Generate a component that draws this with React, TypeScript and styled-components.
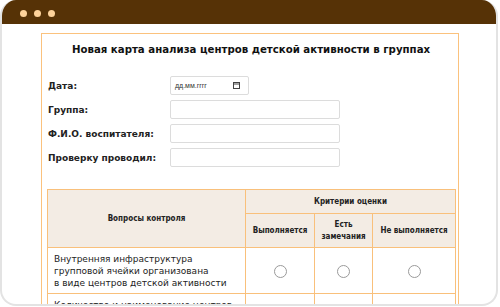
import React from "react";
import styled, { createGlobalStyle } from "styled-components";

const GlobalStyle = createGlobalStyle`
  html, body {
    margin: 0;
    padding: 0;
    background: #ffffff;
  }
  body {
    font-family: "DejaVu Sans", Verdana, sans-serif;
    color: #111;
  }
`;

// неразрывный пробел после предлога, как в исходной карте
const questions = [
  "Внутренняя инфраструктура групповой ячейки организована в\u00a0виде центров детской активности",
  "Количество и наименование центров детской активности соответствует возрасту детей",
];

const fields = ["Группа:", "Ф.И.О. воспитателя:", "Проверку проводил:"];

const App: React.FC = () => {
  return (
    <>
      <GlobalStyle />
      <Screen>
        <Frame>
          <TitleBar>
            <Dot />
            <Dot />
            <Dot />
          </TitleBar>
          <Viewport>
            <Sheet>
              <Heading>Новая карта анализа центров детской активности в группах</Heading>
              <Form>
                <Label>Дата:</Label>
                <DateField>
                  <span>дд.мм.гггг</span>
                  <svg width="7" height="7" viewBox="0 0 7 7">
                    <rect x="0.5" y="0.5" width="6" height="6" fill="none" stroke="#444" />
                    <line x1="0.5" y1="2" x2="6.5" y2="2" stroke="#444" />
                  </svg>
                </DateField>
                {fields.map((f) => (
                  <React.Fragment key={f}>
                    <Label>{f}</Label>
                    <TextInput type="text" />
                  </React.Fragment>
                ))}
              </Form>
              <Table>
                <colgroup>
                  <Col $w={198} />
                  <Col $w={69} />
                  <Col $w={58} />
                  <Col $w={83} />
                </colgroup>
                <thead>
                  <tr>
                    <Th rowSpan={2}>Вопросы контроля</Th>
                    <Th colSpan={3} $h={24}>
                      Критерии оценки
                    </Th>
                  </tr>
                  <tr>
                    <Th $h={34}>Выполняется</Th>
                    <Th $h={34}>
                      Есть
                      <br />
                      замечания
                    </Th>
                    <Th $h={34}>Не выполняется</Th>
                  </tr>
                </thead>
                <tbody>
                  {questions.map((q, i) => (
                    <tr key={i}>
                      <Question>{q}</Question>
                      {[0, 1, 2].map((c) => (
                        <Cell key={c}>
                          <Radio type="radio" name={`q${i}`} />
                        </Cell>
                      ))}
                    </tr>
                  ))}
                </tbody>
              </Table>
            </Sheet>
          </Viewport>
        </Frame>
      </Screen>
    </>
  );
};

export default App;

const Screen = styled.div`
  width: 500px;
  height: 307px;
  overflow: hidden;
`;

const Frame = styled.div`
  box-sizing: border-box;
  width: 498px;
  height: 306px;
  border: 2px solid #e3e3e3;
  border-top: none;
  border-radius: 16px;
  overflow: hidden;
  display: flex;
  flex-direction: column;
  background: #fff;
`;

const TitleBar = styled.div`
  height: 24px;
  flex: none;
  background: #563206;
  display: flex;
  align-items: center;
  gap: 7px;
  padding: 2px 0 0 20px;
  box-sizing: border-box;
  margin: 0 -2px;
`;

const Dot = styled.span`
  width: 7px;
  height: 7px;
  border-radius: 50%;
  background: #fdd29a;
`;

const Viewport = styled.div`
  flex: 1;
  overflow: hidden;
  padding: 9px 37px 0 39px;
`;

const Sheet = styled.div`
  border: 1px solid #fbc27d;
  padding: 0 3px 20px 5px;
  min-height: 400px;
`;

const Heading = styled.h1`
  margin: 0;
  padding: 9px 0 0;
  font-size: 10.2px;
  font-weight: bold;
  text-align: center;
  line-height: 14px;
  color: #111;
`;

const Form = styled.div`
  display: grid;
  grid-template-columns: 122px 1fr;
  row-gap: 5px;
  align-items: center;
  padding: 19px 0 0 1px;
`;

const Label = styled.div`
  font-size: 9px;
  font-weight: bold;
  color: #222;
`;

const DateField = styled.div`
  box-sizing: border-box;
  width: 79px;
  height: 19px;
  border: 1px solid #dcdcdc;
  border-radius: 2px;
  display: flex;
  align-items: center;
  justify-content: space-between;
  padding: 0 8px 0 4px;
  font-family: "Liberation Sans", Arial, sans-serif;
  font-size: 7px;
  color: #333;
`;

const TextInput = styled.input`
  box-sizing: border-box;
  width: 170px;
  height: 19px;
  border: 1px solid #dcdcdc;
  border-radius: 2px;
  margin: 0;
  padding: 0 4px;
`;

const Table = styled.table`
  margin-top: 22px;
  width: 408px;
  table-layout: fixed;
  border-collapse: collapse;
`;

const Col = styled.col<{ $w: number }>`
  width: ${(p) => p.$w}px;
`;

const Th = styled.th<{ $h?: number }>`
  height: ${(p) => (p.$h ? `${p.$h}px` : "auto")};
  padding: 0 2px;
  box-sizing: border-box;
  background: #f3ece4;
  border: 1px solid #f9c07b;
  font-family: "DejaVu Sans Condensed", Tahoma, sans-serif;
  font-size: 8px;
  font-weight: bold;
  line-height: 12px;
  color: #222;
  text-align: center;
  vertical-align: middle;
`;

const Question = styled.td`
  height: 46px;
  padding: 2px 6px;
  box-sizing: border-box;
  border: 1px solid #f9c07b;
  font-size: 9px;
  line-height: 12px;
  color: #222;
  vertical-align: middle;
`;

const Cell = styled.td`
  border: 1px solid #f9c07b;
  text-align: center;
  vertical-align: middle;
`;

const Radio = styled.input`
  appearance: none;
  width: 13px;
  height: 13px;
  margin: 0;
  border: 1px solid #9a9a9a;
  border-radius: 50%;
  background: #fff;
  vertical-align: middle;
`;
